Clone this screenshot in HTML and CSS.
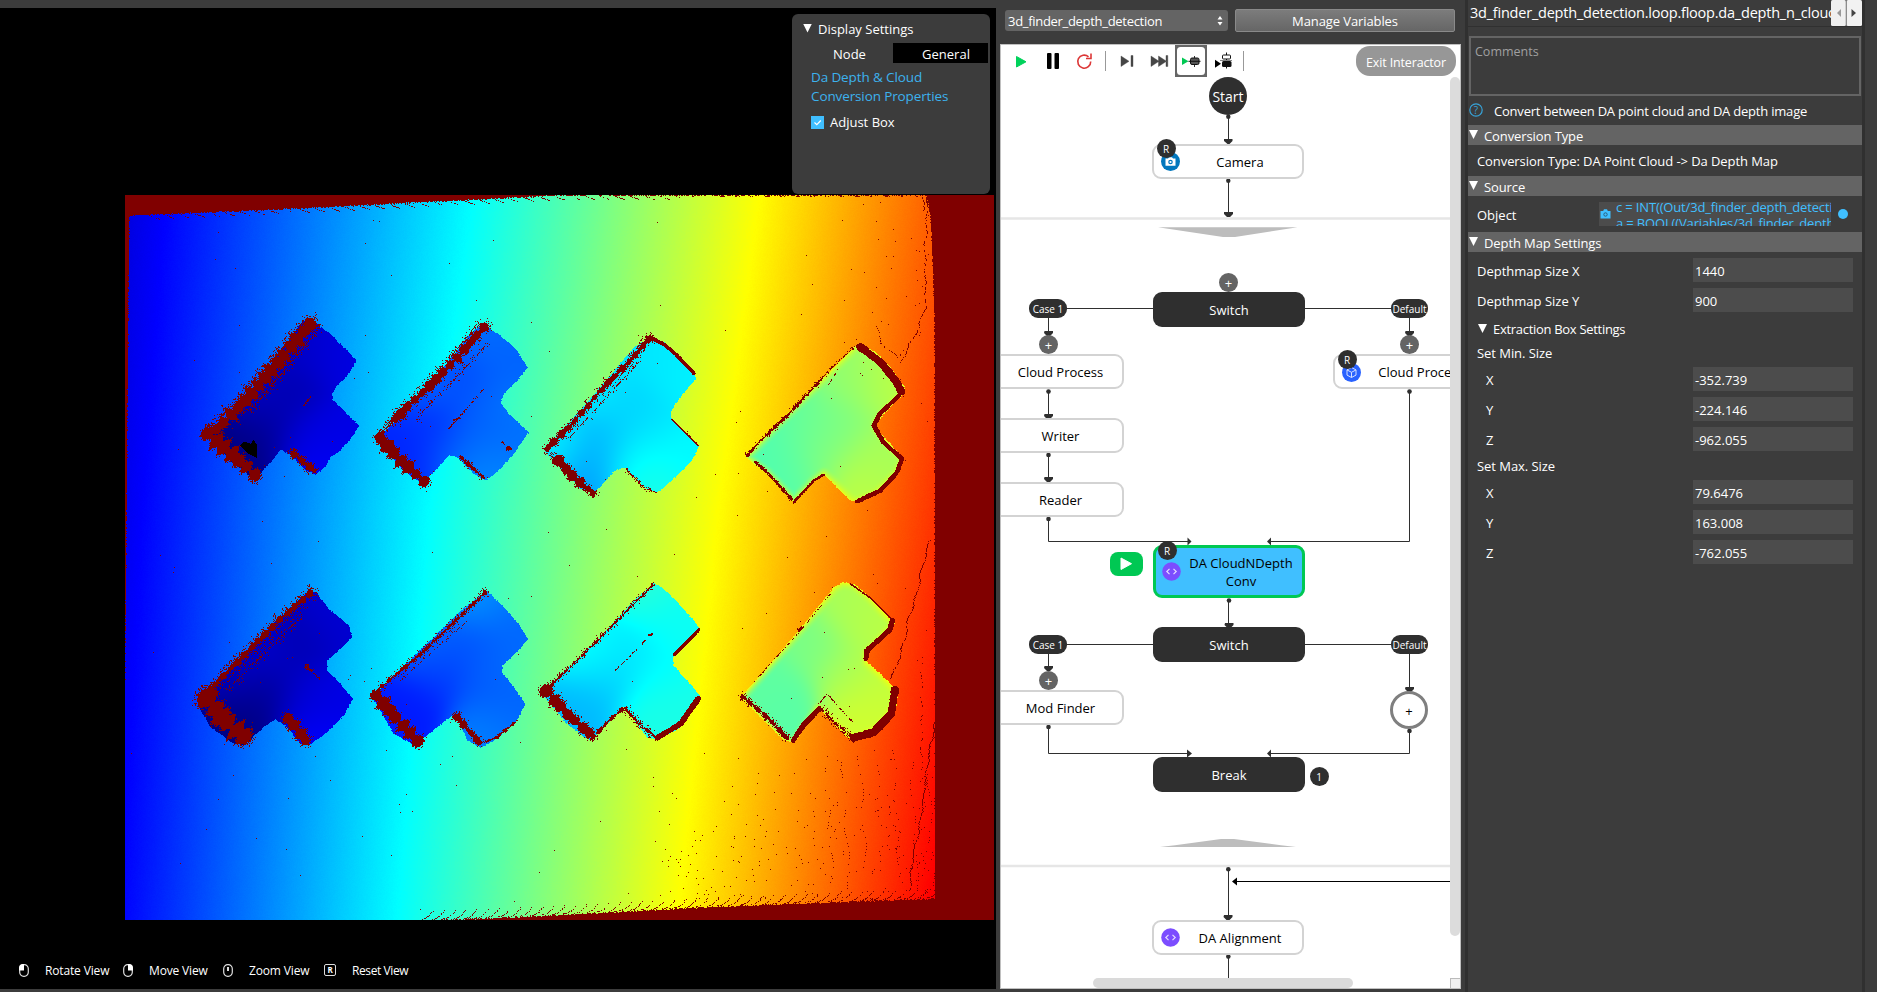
FILE: index.html
```html
<!DOCTYPE html>
<html lang="en">
<head>
<meta charset="utf-8">
<title>Depth detection</title>
<link rel="stylesheet" href="styles.css">
</head>
<body>
<div class="app">
  <section class="viewer">
    <canvas class="depth" id="depth" width="869" height="725"></canvas>
    <div class="display-settings">
      <div class="ds-title"><i class="tri"></i><span>Display Settings</span></div>
      <div class="ds-tabs"><span class="tab">Node</span><span class="tab tab-on">General</span></div>
      <div class="ds-link">Da Depth &amp; Cloud<br>Conversion Properties</div>
      <div class="ds-check">
        <svg width="13" height="13" viewBox="0 0 13 13"><rect width="13" height="13" fill="#40bfff"/><path d="M3.5 6.5l2.3 2.2 4-4.2" fill="none" stroke="#fff" stroke-width="1.2"/></svg>
        <span>Adjust Box</span>
      </div>
    </div>
    <div class="hints">
      <div class="hint hint-a"><svg width="10" height="13" viewBox="0 0 10 13"><rect x=".7" y=".7" width="8.6" height="11.6" rx="4" fill="none" stroke="#ddd" stroke-width="1.2"/><path d="M5 0v6.500H0V4a4 4 0 0 1 4-4z" fill="#fff"/></svg><span>Rotate View</span></div>
      <div class="hint hint-b"><svg width="10" height="13" viewBox="0 0 10 13"><rect x=".7" y=".7" width="8.6" height="11.600" rx="4" fill="none" stroke="#ddd" stroke-width="1.2"/><path d="M5 0v6.500h5V4a4 4 0 0 0-4-4z" fill="#fff"/></svg><span>Move View</span></div>
      <div class="hint hint-c"><svg width="10" height="13" viewBox="0 0 10 13"><rect x=".7" y=".7" width="8.6" height="11.6" rx="4" fill="none" stroke="#ddd" stroke-width="1.2"/><path d="M5 3v4" stroke="#ddd" stroke-width="2"/></svg><span>Zoom View</span></div>
      <div class="hint hint-d"><b class="key">R</b><span>Reset View</span></div>
    </div>
  </section>

  <section class="flow">
    <div class="flow-head">
      <div class="combo"><span>3d_finder_depth_detection</span><svg width="6" height="10" viewBox="0 0 6 10"><path d="M3 0l2.500 3.600h-5zM3 9.500L.5 6h5z" fill="#fff"/></svg></div>
      <div class="manage">Manage Variables</div>
    </div>
    <div class="board">
      <svg class="wires" width="459" height="943" viewBox="1001 45 459 943">
        <path d="M1001 218.500h449M1001 866h449" stroke="#e6e6e6" stroke-width="2.500"/>
        <path d="M1158 227.300h139.500L1235 237h-12z" fill="#bdbdbd"/>
        <path d="M1160 847h136l-15-1.800-47-6.200h-13l-46 6.200z" fill="#bdbdbd"/>
        <g stroke="#2f2f2f" fill="none">
          <path d="M1228.500 116v24M1228.500 180v32M1067 308.500h86M1305 308.500h86M1048.500 318v14M1409.500 318v14M1048.500 391v24M1048.500 455v24M1048.500 519v22.500h140M1409.500 391v150.500h-139M1228.500 600v24M1067 644.500h86M1305 644.500h86M1048.500 654v14M1409.500 654v34M1048.500 727v26.500h140M1409.500 731v22.500h-139M1228.500 869v48M1228.500 957v21"/>
          <path d="M1236 881.500h214" stroke="#000"/>
        </g>
        <path d="M1232 881.500l5-4v8z" fill="#000"/>
        <g fill="#2f2f2f">
          <circle cx="1228.300" cy="116.800" r="2.200"/><circle cx="1228.300" cy="180.800" r="2.200"/>
          <circle cx="1048.500" cy="391.600" r="2.300"/><circle cx="1048.500" cy="455" r="2.300"/><circle cx="1048.500" cy="519" r="2.300"/>
          <circle cx="1409.500" cy="391.600" r="2.300"/><circle cx="1229" cy="600.500" r="2.300"/>
          <circle cx="1048.500" cy="727" r="2.300"/><circle cx="1409.500" cy="731" r="2.300"/>
          <circle cx="1228.300" cy="869.300" r="2.300"/><circle cx="1228.300" cy="956.600" r="2.300"/>
          <path d="M1191.500 541.500l-4-4v8zM1267 541.500l4-4v8zM1192 753.500l-5-4v8zM1267 753.500l4-4v8z"/>
          <path d="M1224 139h8.500v2l-3 3h-2l-3.500-3zM1224 212h9v2l-3 3h-3l-3-3zM1044.500 331h8.500v2l-3 3h-3l-3-3zM1405.500 331h8.500v2l-3 3h-3l-3-3zM1044.500 414h8.500v2l-3 3h-3l-3-3zM1044.500 477h8.500v2l-3 3h-3l-3-3zM1225 623h8.500v2l-3 3h-3l-3-3zM1044.500 666h8.500v2l-3 3h-3l-3-3zM1405.500 687h8.500v2l-3 3h-3l-3-3zM1224 915h8.500v2l-3 3h-3l-3-3z"/>
        </g>
      </svg>
      <div class="nodes">
        <div class="node start">Start</div>
        <div class="node box n-camera">Camera</div>
        <div class="node dot-plus p1">+</div>
        <div class="node dark n-switch1">Switch</div>
        <div class="node pill pl1">Case 1</div>
        <div class="node pill pl2">Default</div>
        <div class="node dot-plus p2">+</div>
        <div class="node dot-plus p3">+</div>
        <div class="node box n-cloud1">Cloud Process</div>
        <div class="node box n-writer">Writer</div>
        <div class="node box n-reader">Reader</div>
        <div class="node box n-cloud2">Cloud Process</div>
        <div class="node box n-conv">DA CloudNDepth<br>Conv</div>
        <div class="node dark n-switch2">Switch</div>
        <div class="node pill pl3">Case 1</div>
        <div class="node pill pl4">Default</div>
        <div class="node dot-plus p4">+</div>
        <div class="node box n-mod">Mod Finder</div>
        <div class="node ring">+</div>
        <div class="node dark n-break">Break</div>
        <div class="node badge b-one">1</div>
        <div class="node box n-align">DA Alignment</div>
        <svg class="node ic i-camera" viewBox="0 0 19 19"><circle cx="9.500" cy="9.500" r="9.500" fill="#0277bd"/><path d="M4.500 6.500h2.500l1-1.300h3l1 1.300h2.500v7.300h-10z" fill="#fff"/><circle cx="9.500" cy="10" r="1.700" fill="none" stroke="#0277bd" stroke-width="1.200"/></svg>
        <svg class="node ic i-cube" viewBox="0 0 19 19"><circle cx="9.500" cy="9.500" r="9.500" fill="#2962ff"/><path d="M9.500 4.500l4.500 2.400v5.200l-4.500 2.400L5 12.100V6.900zM5 6.900l4.500 2.400L14 6.900M9.500 9.300v5.200" fill="none" stroke="#d5e0ff"/></svg>
        <svg class="node ic i-code1" viewBox="0 0 19 19"><circle cx="9.500" cy="9.500" r="9.300" fill="#7c4dff"/><path d="M7.500 6.800l-2.700 2.700 2.700 2.700M11.500 6.800l2.700 2.700-2.700 2.700" fill="none" stroke="#e6dcff" stroke-width="1.200"/></svg>
        <svg class="node ic i-code2" viewBox="0 0 19 19"><circle cx="9.500" cy="9.500" r="9.300" fill="#7c4dff"/><path d="M7.500 6.800l-2.700 2.700 2.700 2.700M11.500 6.800l2.700 2.700-2.700 2.700" fill="none" stroke="#e6dcff" stroke-width="1.200"/></svg>
        <div class="node badge b-r1">R</div>
        <div class="node badge b-r2">R</div>
        <div class="node badge b-r3">R</div>
        <svg class="node runmark" viewBox="0 0 33 24"><rect width="33" height="24" rx="8" fill="#00c853"/><path d="M11 6l10.500 5.700L11 17.500z" fill="#fff" stroke="#fff" stroke-linejoin="round"/></svg>
      </div>
      <svg class="tools" width="250" height="34" viewBox="1010 44 250 34">
        <path d="M1016.500 56.500v10.500l9.500-5.200z" fill="#00d25b" stroke="#00d25b" stroke-linejoin="round"/>
        <rect x="1047" y="53" width="4.500" height="16" rx="1"/><rect x="1054.500" y="53" width="4.500" height="16" rx="1"/>
        <path d="M1088.500 56.800a6.500 6.500 0 1 0 2.200 4.700M1091 53.500v5h-5" fill="none" stroke="#dc3737" stroke-width="1.600"/>
        <path d="M1105.500 51v20M1243.500 51v20" stroke="#999"/>
        <path d="M1121 56v10.500l8-5.200zM1131 55.500h2v11h-2zM1151 56v10.500l8-5.200zM1158.500 56v10.500l8-5.200zM1166 55.500h1.800v11h-1.800z" fill="#464646" stroke="#464646" stroke-width=".4"/>
        <rect x="1175.500" y="45.500" width="31" height="31" fill="#666" stroke="#666"/><rect x="1177" y="47" width="28" height="28" rx="3.500" fill="#fff"/>
        <path d="M1182 57.500v7.500l6.500-3.700z" fill="#00c853"/>
        <path d="M1194.500 56v11" stroke="#333"/><rect x="1190.500" y="58" width="8.500" height="6.500" rx="1.500" fill="#555" stroke="#111"/><path d="M1188.500 61.300h12" stroke="#111"/>
        <path d="M1215 59.800v8l6-4z"/><path d="M1226.500 52.500v16" stroke="#111"/><rect x="1222.500" y="55" width="8" height="4" rx="1" fill="#fff" stroke="#111"/><rect x="1222" y="61" width="9.500" height="6" rx="1.500" fill="#111"/><path d="M1220 60.500h12" stroke="#888"/>
      </svg>
      <div class="exit">Exit Interactor</div>
      <i class="vbar"></i><i class="hbar"></i><i class="corner"></i>
    </div>
  </section>

  <section class="props">
    <div class="path-row"><span class="path">3d_finder_depth_detection.loop.floop.da_depth_n_cloud</span>
      <svg class="nav" width="31" height="26" viewBox="0 0 31 26"><rect width="15" height="26" rx="1.500" fill="#f0f0f0"/><rect x="15.500" width="15.500" height="26" rx="1.500" fill="#f2f2f2"/><path d="M15.200 0v26" stroke="#888"/><path d="M10 9v8l-4-4z" fill="#999"/><path d="M20.500 9v8l4.500-4z" fill="#444"/></svg>
    </div>
    <div class="comments">Comments</div>
    <div class="help"><svg width="14" height="14" viewBox="0 0 14 14"><circle cx="7" cy="7" r="6.200" fill="none" stroke="#37a3d8" stroke-width="1.200"/></svg><b class="q">?</b><span>Convert between DA point cloud and DA depth image</span></div>
    <div class="head"><i class="tri"></i><span>Conversion Type</span></div>
    <div class="line line-type">Conversion Type: DA Point Cloud -&gt; Da Depth Map</div>
    <div class="head"><i class="tri"></i><span>Source</span></div>
    <div class="line line-object"><span>Object</span>
      <div class="object-field"><svg width="11" height="10" viewBox="0 0 11 10"><path d="M.5 2h2.700L4 .3h3L7.800 2h2.700v7.500H.500z" fill="#40bfff"/><circle cx="5.500" cy="5.500" r="1.700" fill="none" stroke="#285f80"/></svg><p>c = INT((Out/3d_finder_depth_detection<br>a = BOOL((Variables/3d_finder_depth_de</p></div>
      <i class="port"></i>
    </div>
    <div class="head"><i class="tri"></i><span>Depth Map Settings</span></div>
    <div class="fields first">
      <div class="field"><span>Depthmap Size X</span><b>1440</b></div>
      <div class="field"><span>Depthmap Size Y</span><b>900</b></div>
    </div>
    <div class="sub"><i class="tri"></i><span>Extraction Box Settings</span></div>
    <div class="group-name">Set Min. Size</div>
    <div class="fields axes">
      <div class="field"><span>X</span><b>-352.739</b></div>
      <div class="field"><span>Y</span><b>-224.146</b></div>
      <div class="field"><span>Z</span><b>-962.055</b></div>
    </div>
    <div class="group-name max">Set Max. Size</div>
    <div class="fields axes">
      <div class="field"><span>X</span><b>79.6476</b></div>
      <div class="field"><span>Y</span><b>163.008</b></div>
      <div class="field"><span>Z</span><b>-762.055</b></div>
    </div>
  </section>
</div>
<script src="depth.js"></script>
</body>
</html>
```

FILE: styles.css
```css
* { box-sizing: border-box; }
body { margin: 0; background: #3c3c3c; font: 13px/18px "Open Sans", "Noto Sans", sans-serif; color: #fff; overflow: hidden; }
i { font-style: normal; }
b { font-weight: normal; }
svg { display: block; flex: none; }
.app { display: flex; width: 1877px; height: 992px; }
.tri { display: block; width: 9px; height: 9px; background: #fff; clip-path: polygon(0 0, 100% 0, 50% 100%); flex: none; }

/* depth viewer */
.viewer { position: relative; width: 996px; height: 981px; margin-top: 8px; background: #000; flex: none; padding: 187px 0 0 125px; }
.depth { display: block; }
.display-settings { position: absolute; left: 792px; top: 6px; width: 198px; height: 180px; background: #3c3c3c; border-radius: 6px; padding: 6px 2px 0 11px; }
.ds-title { display: flex; gap: 6px; align-items: center; height: 18px; }
.ds-title .tri { margin-top: -2px; }
.ds-tabs { display: flex; margin-top: 5px; margin-left: -8px; height: 20px; }
.tab { width: 98px; padding-left: 11px; text-align: center; line-height: 22px; }
.tab-on { width: 95px; background: #000; }
.ds-link { color: #3cb2ee; font-size: 13.500px; line-height: 19px; letter-spacing: -.12px; margin: 5px 0 0 8px; }
.ds-check { display: flex; gap: 6px; margin: 7px 0 0 8px; align-items: center; height: 18px; }
.ds-check svg { margin-top: 1px; }
.hints { display: flex; position: absolute; left: 19px; top: 953px; height: 18px; }
.hint { display: flex; align-items: center; font-size: 12px; letter-spacing: -.15px; gap: 16px; }
.hint span { padding-top: 2px; }
.hint-a { width: 104px; }
.hint-b { width: 100px; }
.hint-c { width: 101px; }
.hint-d { letter-spacing: -.4px; }
.key { border: 1.500px solid #ddd; border-radius: 2px; width: 12px; height: 12px; font: bold 8px/9px "Open Sans", sans-serif; text-align: center; }

/* flow editor */
.flow { width: 465px; padding-left: 4px; flex: none; }
.flow-head { display: flex; gap: 7px; height: 44px; padding: 9px 0 0 5px; }
.combo { display: flex; justify-content: space-between; align-items: center; width: 223px; height: 21px; margin-top: 1px; padding: 0 5px 0 3px; background: #646464; border-radius: 3px; letter-spacing: -.3px; }
.manage { width: 220px; height: 23px; line-height: 22px; text-align: center; border: 1px solid #8a8a8a; border-radius: 2px; background: linear-gradient(#7c7c7c, #666); letter-spacing: -.1px; }
.board { position: relative; width: 461px; height: 945px; background: #fff; border: 1px solid #c0c0c0; overflow: hidden; color: #000; }
.wires { position: absolute; left: 0; top: 0; }
.nodes { position: absolute; left: -1001px; top: -45px; width: 2451px; height: 1023px; overflow: hidden; }
.node { position: absolute; display: flex; align-items: center; justify-content: center; text-align: center; white-space: nowrap; }
.box { width: 152px; height: 35px; left: 1152px; border: 2px solid #d3d3d3; border-radius: 9px; background: #fff; padding: 0 0 0 24px; }
.dark { left: 1153px; width: 152px; height: 35px; border-radius: 9px; background: #2f2f2f; color: #fff; }
.start { left: 1209px; top: 77px; width: 38px; height: 38px; border-radius: 50%; background: #2f2f2f; color: #fff; font-size: 14px; padding-top: 1px; }
.pill { height: 19px; width: 38px; border-radius: 9px; background: #2f2f2f; color: #fff; font-size: 10px; }
.badge { width: 19px; height: 19px; border-radius: 50%; background: #2f2f2f; color: #fff; font-size: 10px; padding: 1px 1px 0 0; }
.dot-plus { width: 19px; height: 19px; border-radius: 50%; background: #646464; color: #fff; font-size: 13px; padding-top: 1px; }
.ring { left: 1390px; top: 691px; width: 38px; height: 38px; border: 3px solid #7f7f7f; border-radius: 50%; background: #fff; padding-top: 2px; }
.ic { width: 19px; height: 19px; }
.n-camera { top: 144px; }
.n-switch1 { top: 292px; }
.n-cloud1, .n-writer, .n-reader, .n-mod { left: 972px; padding-left: 25px; }
.n-cloud1 { top: 354px; }
.n-writer { top: 418px; }
.n-reader { top: 482px; }
.n-cloud2 { left: 1333px; top: 354px; }
.n-conv { left: 1153px; top: 545px; height: 53px; border: 3px solid #00c853; background: #40bfff; }
.n-switch2 { top: 627px; }
.n-mod { top: 690px; }
.n-break { top: 757px; }
.n-align { top: 920px; }
.p1 { left: 1219px; top: 273px; }
.p2 { left: 1039px; top: 335px; }
.p3 { left: 1400px; top: 335px; }
.p4 { left: 1039px; top: 671px; }
.pl1 { left: 1029px; top: 299px; padding-top: 1px; }
.pl2 { left: 1391px; top: 299px; width: 37px; padding-top: 1px; }
.pl3 { left: 1029px; top: 635px; }
.pl4 { left: 1391px; top: 635px; width: 37px; }
.b-one { left: 1310px; top: 767px; }
.b-r1 { left: 1157px; top: 139px; }
.b-r2 { left: 1338px; top: 350px; }
.b-r3 { left: 1158px; top: 541px; }
.i-camera { left: 1161px; top: 152px; }
.i-cube { left: 1342px; top: 363px; }
.i-code1 { left: 1162px; top: 562px; }
.i-code2 { left: 1161px; top: 928px; }
.runmark { left: 1110px; top: 552px; width: 33px; height: 24px; }
.tools { position: absolute; left: 9px; top: -1px; }
.exit { position: absolute; left: 355px; top: 1px; width: 100px; height: 30px; border-radius: 14px; background: #979797; color: #fff; line-height: 33px; text-align: center; font-size: 12.500px; letter-spacing: -.15px; }
.vbar { position: absolute; left: 449px; top: 32px; width: 10px; height: 859px; border-radius: 5px; background: #dcdcdc; }
.hbar { position: absolute; left: 92px; top: 933px; width: 260px; height: 10px; border-radius: 5px; background: #dadada; }
.corner { position: absolute; left: 449px; top: 933px; width: 11px; height: 11px; background: #f0f0f0; border: 1px solid #bbb; }

/* properties */
.props { width: 400px; height: 992px; border: solid #303030; border-width: 0 3px; flex: none; margin-left: 4px; }
.path-row { display: flex; height: 27px; border-bottom: 1.500px solid #303030; }
.path { width: 364px; overflow: hidden; padding: 3px 0 0 2px; font-size: 14.500px; letter-spacing: -.22px; line-height: 20px; white-space: nowrap; }
.comments { width: 392px; height: 60px; margin: 9px 0 0 1px; border: 2px solid #646464; color: #a0a0a0; padding: 5px 4px; font-size: 12.500px; }
.help { position: relative; display: flex; height: 29px; padding: 7px 0 0 1px; gap: 11px; }
.q { position: absolute; left: 1px; top: 5px; width: 14px; text-align: center; color: #37a3d8; font-size: 10px; }
.help span { line-height: 17px; white-space: nowrap; letter-spacing: -.21px; }
.head { display: flex; gap: 6px; height: 20px; background: #646464; padding: 5px 0 0 1px; }
.head span { line-height: 13px; letter-spacing: -.1px; }
.line { padding-left: 9px; }
.line-type { height: 31px; line-height: 33px; letter-spacing: -.08px; }
.line-object { position: relative; display: flex; height: 36px; line-height: 38px; }
.line-object > span { width: 122px; }
.object-field { display: flex; gap: 5px; width: 232px; height: 24px; margin-top: 6px; padding: 0 0 0 1px; background: #4c4c4c; overflow: hidden; color: #40bfff; align-items: center; letter-spacing: -.15px; }
.object-field p { margin: 2px 0 0; width: 216px; overflow: hidden; line-height: 16px; white-space: nowrap; }
.port { width: 10px; height: 10px; border-radius: 50%; background: #40bfff; margin: 13px 0 0 7px; }
.fields { display: flex; flex-direction: column; gap: 6px; padding: 6px 9px 0; }
.field { display: flex; justify-content: space-between; height: 24px; line-height: 27px; }
.field b { width: 160px; background: #4c4c4c; padding-left: 2px; }
.sub { display: flex; gap: 6px; padding: 12px 0 0 10px; height: 32px; }
.sub span { line-height: 10px; letter-spacing: -.3px; }
.group-name { height: 18px; padding-left: 9px; line-height: 18px; letter-spacing: -.05px; }
.axes { padding-top: 5px; }
.axes .field span { padding-left: 9px; }
.max { margin-top: 7px; line-height: 16px; }
.max + .axes { padding-top: 4px; }
```

FILE: depth.js
```js
// Renders the depth map with a jet palette: a tilted surface, eight T fittings
// and the maroon no-data speckle along their occluded edges.
const W = 869, H = 725, X0 = 125, Y0 = 195;
const canvas = document.getElementById('depth');
const ctx = canvas.getContext('2d');
const img = ctx.createImageData(W, H);
let seed = 12345;
const rnd = () => { seed = (seed * 1664525 + 1013904223) >>> 0; return seed / 4294967296; };

function jet(v) {
  const c = o => Math.max(0, Math.min(1, 1.5 - Math.abs(4 * v - o))) * 255;
  return [c(3), c(2), c(1)];
}
function put(x, y, c) {
  x = Math.round(x - X0); y = Math.round(y - Y0);
  if (x < 0 || y < 0 || x >= W || y >= H) return;
  const i = (y * W + x) * 4;
  img.data[i] = c[0]; img.data[i + 1] = c[1]; img.data[i + 2] = c[2]; img.data[i + 3] = 255;
}
const VOID = [128, 0, 0];
const lerp = (a, b, t) => a + (b - a) * t;
const track = (pts, t) => {
  for (let i = 1; i < pts.length; i++) if (t <= pts[i][0] || i === pts.length - 1) {
    const [a, b] = [pts[i - 1], pts[i]];
    return lerp(a[1], b[1], (t - a[0]) / (b[0] - a[0]));
  }
};
const blueX = [[200, 165], [510, 142], [920, 120]];
const cyanX = [[200, 472], [510, 429], [920, 397]];
const yellowX = [[200, 758], [510, 718], [920, 677]];
const endV = [[200, .785], [510, .825], [920, .882]];
const topY = [[125, 215.5], [300, 208], [500, 198], [560, 195], [1000, 195]];
const bottomY = [[125, 920], [430, 920], [520, 916.5], [700, 907], [935, 898]];
const rightX = [[195, 926], [215, 930], [255, 932], [320, 934], [920, 934.5]];

for (let y = Y0; y < Y0 + H; y++) {
  const b = track(blueX, y), c = track(cyanX, y), l = track(yellowX, y), e = track(endV, y), r = track(rightX, y);
  for (let x = X0; x < X0 + W; x++) {
    const jag = (rnd() - .5) * 1.6;
    if (y < track(topY, x) + jag || y > track(bottomY, x) + jag || x > r + jag * .6 || x < lerp(129, 124.5, (y - 195) / 500) + jag * .5) { put(x, y, VOID); continue; }
    let v;
    if (x < c) v = .125 + (x - b) / (c - b) * .25;
    else if (x < l) v = .375 + (x - c) / (l - c) * .25;
    else v = .625 + (x - l) / (934 - l) * (e - .625);
    put(x, y, jet(v + (rnd() - .5) * .004));
  }
}

function segDist(px, py, pts) {
  let best = [1e9, 0], run = 0;
  for (let i = 1; i < pts.length; i++) {
    const [ax, ay] = pts[i - 1], [bx, by] = pts[i];
    const dx = bx - ax, dy = by - ay, len = Math.hypot(dx, dy);
    const t = Math.max(0, Math.min(1, ((px - ax) * dx + (py - ay) * dy) / (len * len)));
    const d = Math.hypot(px - ax - dx * t, py - ay - dy * t);
    if (d < best[0]) best = [d, run + t * len];
    run += len;
  }
  return best;
}
function inside(px, py, pts) {
  let hit = false;
  for (let i = 0, j = pts.length - 1; i < pts.length; j = i++) {
    const [ax, ay] = pts[i], [bx, by] = pts[j];
    if ((ay > py) !== (by > py) && px < (bx - ax) * (py - ay) / (by - ay) + ax) hit = !hit;
  }
  return hit;
}
const bounds = (pts, m) => [
  Math.floor(Math.min(...pts.map(p => p[0])) - m), Math.ceil(Math.max(...pts.map(p => p[0])) + m),
  Math.floor(Math.min(...pts.map(p => p[1])) - m), Math.ceil(Math.max(...pts.map(p => p[1])) + m)];

// Shapes are stored on a grid of one third of a pixel from a local origin.
const pairs = (o, list) => {
  const out = [];
  for (let i = 0; i < list.length; i += 2) out.push([o[0] + list[i] / 3, o[1] + list[i + 1] / 3]);
  return out;
};
// core: half width of the solid streak; spread: reach of the speckle; p: its density
function band(pts, core, spread, p) {
  const [xa, xb, ya, yb] = bounds(pts, core + spread + 2);
  const clump = Array.from({ length: 300 }, (_, i) => p ? (i % 2 ? .1 : .75) + rnd() * .65 : .9 + rnd() * .2);
  for (let y = ya; y <= yb; y++) for (let x = xa; x <= xb; x++) {
    const [d, t] = segDist(x, y, pts);
    const k = t / 5, i = Math.floor(k);
    const w = core * lerp(clump[i], clump[i + 1], k - i);
    if (d < w + (rnd() - .5) * (p ? 1.6 : .4)) put(x, y, VOID);
    else if (p && d < w + spread && rnd() < p * Math.pow(1 - (d - w) / spread, 1.6)) put(x, y, VOID);
  }
}
function part(o, outline, values, bands, rim) {
  const poly = pairs(o, outline);
  const pts = values.map(v => [o[0] + v[0] / 3, o[1] + v[1] / 3, v[2]]);
  const [xa, xb, ya, yb] = bounds(poly, 1);
  const closed = poly.concat([poly[0]]);
  for (let y = ya; y <= yb; y++) for (let x = xa; x <= xb; x++) {
    if (!inside(x + (rnd() - .5), y + (rnd() - .5), poly)) continue;
    let s = 0, n = 0;
    for (const q of pts) {
      const d2 = (x - q[0]) ** 2 + (y - q[1]) ** 2;
      const w = Math.exp(-d2 / 900) + 1e-9;
      s += w * q[2]; n += w;
    }
    let v = s / n;
    if (rim) { const d = segDist(x, y, closed)[0]; v += (rim - v) * Math.pow(Math.max(0, 1 - d / 9), 2); }
    put(x, y, jet(v));
  }
  for (const [list, core, spread, p] of bands) band(pairs(o, list), core, spread, p);
}

const A = [100, 180], B = [520, 180], C = [100, 540], D = [520, 540];

part(A, [625,412,660,440,690,460,730,500,768,540,745,580,710,615,695,640,697,658,735,695,776,735,750,775,715,815,690,830,675,860,645,882,615,870,575,825,540,808,510,845,480,880,455,892,400,850,355,800,330,765,365,735,480,595,600,430],
  [[440,800,.0],[500,740,.03],[580,640,.045],[690,520,.085],[740,540,.1],[700,740,.1],[620,770,.09],[650,840,.12],[600,520,.07],[480,640,.07]],
  [[[628,432,550,525,440,655,345,750], 7, 8, .4], [[650,450,560,560,450,690], 0, 9, .17], [[600,440,520,535,420,650,330,740], 0, 6, .3], [[325,762,395,822,462,882], 8, 5, .5], [[580,820,640,870], 3, 5, .6], [[630,650,610,675], .3, 1, .4]]);
const hole = pairs(A, [418,795,430,783,450,790,460,778,470,795,468,832,445,820]);
for (let y = 435; y < 462; y++) for (let x = 236; x < 260; x++) if (inside(x, y, hole)) put(x, y, [0, 0, 0]);

part(A, [1145,430,1200,465,1245,505,1283,562,1245,605,1210,640,1200,668,1225,700,1285,755,1240,820,1190,875,1155,900,1120,880,1070,830,1045,825,1010,865,985,890,960,907,910,870,860,815,835,775,870,735,1000,600,1100,470],
  [[940,830,.16],[1000,740,.165],[1120,620,.19],[1230,540,.22],[1180,480,.23],[1140,730,.215],[1200,790,.235],[1160,870,.26],[1190,660,.25],[1060,820,.23],[1000,620,.22]],
  [[[1150,442,1080,520,990,615,930,670,885,715], 4.500, 6, .35], [[1130,430,1050,530,960,630,820,770], 0, 5, .22], [[1160,490,1050,610,950,710], 0, 6, .13], [[885,715,830,770], 0, 6, .45], [[840,775,900,840,968,900], 6, 4, .4], [[1080,830,1150,892], 1.400, 4, .45], [[1040,750,1085,700,1150,625], 0, 1.600, .4], [[1060,720,1078,712], 1.200, 1, .2], [[1205,785,1210,790], .5, 1, .3], [[1222,804,1230,804], 1.500, 1, .3]]);

part(B, [395,467,430,485,480,530,515,575,528,593,480,650,452,690,452,712,490,755,535,797,515,840,465,890,410,937,375,925,315,862,285,868,220,940,180,925,110,850,72,812,110,765,240,620,340,500],
  [[200,870,.28],[250,780,.3],[320,680,.325],[420,560,.35],[490,580,.365],[380,740,.35],[480,820,.37],[400,910,.4],[250,640,.36],[120,790,.36],[340,840,.38]],
  [[[385,475,320,550,240,630,160,725,80,805], 3, 5, .35], [[360,540,240,670,140,780], 0, 4, .12], [[115,842,160,890,218,938], 4.500, 4, .35], [[390,470,430,492,465,520,520,578], 1.800, 0, 0], [[455,717,533,795], .8, 0, 0], [[318,868,370,920,408,937], .5, 3, .35], [[90,825,190,930], 0, 4, .3]]);

part(B, [1005,495,1060,510,1110,560,1152,620,1150,640,1100,690,1070,725,1070,745,1100,780,1150,835,1130,880,1070,940,1010,965,990,960,910,882,880,905,820,965,740,880,675,830,760,740,900,600],
  [[760,810,.455],[820,880,.455],[860,740,.47],[1000,600,.515],[950,740,.5],[1060,830,.54],[1090,600,.56],[1000,920,.56],[900,830,.51]],
  [[[1020,500,1080,545,1125,600,1142,632], 3.800, 0, 0], [[1135,645,1078,700,1060,735,1088,785,1145,835], 2.300, 0, 0], [[1145,835,1128,878,1080,930,1010,963], 2.200, 0, 0], [[820,965,880,900,910,882], 1.200, 0, 0], [[705,845,745,880,812,955], 1.500, 1, .4], [[680,825,720,780,800,705,890,610], 1.200, 3, .3], [[890,610,950,545,1005,497], .2, 3, .3], [[920,620,960,555], 0, .8, .4]], .6);

part(C, [630,148,650,160,685,205,745,255,755,290,715,330,680,360,680,390,720,430,757,475,730,525,680,575,630,612,600,610,560,560,525,535,490,560,430,615,400,610,330,560,290,490,330,440,480,290,570,200],
  [[440,520,.0],[480,450,.02],[600,320,.05],[700,250,.08],[700,460,.1],[600,480,.08],[640,580,.12],[480,340,.08],[420,400,.07]],
  [[[628,158,540,235,440,335,320,455], 2.800, 8, .42], [[600,230,480,350,380,450], 0, 8, .14], [[325,480,365,530,425,585], 11, 6, .6], [[562,532,615,598], 5, 5, .55], [[620,380,632,390], 1.500, 2, .35], [[632,390,658,415], 0, 2, .4]]);

part(C, [1160,150,1205,195,1250,245,1283,295,1250,335,1205,375,1205,395,1240,440,1275,490,1250,540,1190,595,1140,622,1100,600,1065,520,1035,540,980,585,940,613,880,580,815,470,860,425,1000,290,1080,210],
  [[940,510,.15],[1020,400,.175],[1120,320,.2],[1220,250,.225],[1160,430,.205],[1220,500,.225],[1150,560,.25],[1190,380,.24],[1140,190,.27],[1000,320,.23]],
  [[[1155,155,1040,265,950,350,835,445], 1.600, 5, .3], [[1100,240,1000,330,900,420], 0, 4, .08], [[828,465,880,525,950,600], 7, 4, .5], [[1070,530,1135,605], 3.200, 4, .45], [[1135,612,1190,590,1250,540], 1.300, 1, .3]]);

part(D, [400,128,430,145,475,190,520,240,538,265,495,310,458,345,458,375,500,420,538,465,530,495,480,560,410,600,380,590,310,500,280,530,215,600,190,590,130,540,70,465,120,405,240,290,340,180],
  [[200,500,.305],[260,410,.325],[330,330,.35],[430,230,.375],[500,260,.39],[420,400,.375],[480,490,.4],[390,520,.4],[390,160,.42],[220,340,.385]],
  [[[395,135,270,260,190,340,90,435], 1, 4, .32], [[80,455,140,520,215,585], 6, 5, .4], [[215,595,260,545,305,505], 1.700, 1, .2], [[315,505,350,545,405,590], 1.200, 5, .42], [[410,592,480,550,533,475], 2.800, 0, 0], [[462,342,535,268], 1.700, 0, 0], [[280,395,350,325], 0, 1.500, .3], [[365,310,372,300], .8, .6, .3], [[385,284,396,282], 1, .6, .3]]);

part(D, [965,125,1000,130,1050,170,1100,225,1125,250,1080,300,1040,340,1040,365,1080,400,1130,450,1130,490,1080,560,1010,600,980,590,895,505,870,540,820,607,790,600,660,470,740,380,860,240,940,140],
  [[780,490,.46],[740,450,.47],[880,320,.495],[1000,200,.54],[980,400,.54],[1070,450,.57],[1020,530,.58],[1060,240,.56]],
  [[[1116,238,1108,268,1040,330,1036,355], 2.600, 0, 0], [[1123,450,1112,520,1060,575,1000,592], 4, 0, 0], [[818,600,850,552,897,505], 2.600, 0, 0], [[665,468,730,520,800,592], 2.200, 4, .4], [[905,505,945,550,1000,592], 1, 5, .35], [[990,130,1050,173,1110,232], .8, 0, 0], [[895,490,920,460,960,505,1000,548], 0, 1, .55], [[930,160,845,265,700,425], 0, 1, .2], [[835,268,845,260], 1.200, 1, .2]], .61);

// Loose no-data pixels, denser toward the lower right corner
for (let i = 0; i < 170; i++) put(130 + rnd() * 800, 220 + rnd() * 690, VOID);
for (let i = 0; i < 230; i++) put(932 - Math.pow(rnd(), 1.3) * 280, 745 + Math.sqrt(rnd()) * 155, VOID);
for (let i = 0; i < 40; i++) put(840 + rnd() * 90, 200 + rnd() * 180, VOID);
for (let c = 0; c < 7; c++) for (let y = 750; y < 890; y += 3) if (rnd() < .42) put(825 + c * 17 + (y - 750) * .05 + Math.sin(y / 9 + c) * 2, y, VOID);

function crack(list, gap) {
  for (let i = 1; i < list.length; i++) {
    const [ax, ay] = list[i - 1], [bx, by] = list[i], n = Math.hypot(bx - ax, by - ay);
    for (let t = 0; t < n; t++) if (rnd() > gap) put(lerp(ax, bx, t / n) + Math.sin((t + ay) / 4) + (rnd() - .5), lerp(ay, by, t / n), VOID);
  }
}
crack(pairs(D, [1228,0,1200,100,1190,160,1165,230,1150,310,1130,370,1112,415]), .15);
crack(pairs(D, [1243,550,1225,640,1210,770,1195,870,1175,960,1168,1050]), .1);
crack(pairs(B, [1218,45,1220,120,1213,200,1215,380,1190,450,1140,545]), .35);
crack(pairs(B, [1210,50,1208,90]), .2);
crack(pairs(B, [1065,430,1085,490,1130,530,1160,500]), .5);
crack(pairs(D, [1205,350,1203,660,1215,800]), .75);

// Raked dashes along the surface's top and bottom edges
for (let x = 420; x < 934; x += 11) {
  const y = track(bottomY, x);
  for (let k = 0; k < 12; k++) if (rnd() < .8) put(x + k * 1.1 + rnd(), y - 1 - k * k * .07, VOID);
}
for (let x = 150; x < 920; x += 15) {
  const y = track(topY, x);
  const n = x < 680 ? 10 : 5;
  for (let k = 0; k < n; k++) if (rnd() < .6) put(x + k, y + 1 + (x < 680 ? k * .35 : 0), VOID);
}
ctx.putImageData(img, 0, 0);
```
